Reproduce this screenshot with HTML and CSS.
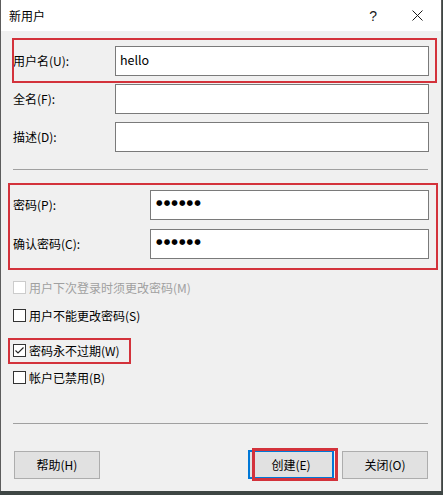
FILE: index.html
```html
<!DOCTYPE html>
<html lang="zh-CN">
<head>
<meta charset="utf-8">
<title>新用户</title>
<link rel="stylesheet" href="styles.css">
</head>
<body>
<div class="window">
  <div class="titlebar">
    <span class="title">新用户</span>
    <span class="help-q">?</span>
    <svg class="close-x" width="11" height="11" viewBox="0 0 11 11"><path d="M0.5 0.5 L10.5 10.5 M10.5 0.5 L0.5 10.5" stroke="#1a1a1a" stroke-width="1" fill="none"/></svg>
  </div>
  <div class="content">
    <div class="row">
      <label class="lbl lbl-a">用户名(U):</label>
      <div class="field">hello</div>
    </div>
    <div class="row gap8">
      <label class="lbl lbl-a">全名(F):</label>
      <div class="field"></div>
    </div>
    <div class="row gap8">
      <label class="lbl lbl-a">描述(D):</label>
      <div class="field"></div>
    </div>
    <div class="sep sep1"></div>
    <div class="row pw1">
      <label class="lbl lbl-b">密码(P):</label>
      <div class="field pw">●●●●●●</div>
    </div>
    <div class="row gap9">
      <label class="lbl lbl-b">确认密码(C):</label>
      <div class="field pw">●●●●●●</div>
    </div>
    <div class="check c1 disabled"><span class="box"></span><span>用户下次登录时须更改密码(M)</span></div>
    <div class="check c2"><span class="box"></span><span>用户不能更改密码(S)</span></div>
    <div class="check c3"><span class="box"><svg width="11" height="11" viewBox="0 0 11 11"><path d="M1.5 5.5 L4 8 L9.5 2.5" stroke="#222" stroke-width="1.1" fill="none"/></svg></span><span>密码永不过期(W)</span></div>
    <div class="check c4"><span class="box"></span><span>帐户已禁用(B)</span></div>
    <div class="sep sep2"></div>
    <div class="buttons">
      <button class="btn btn-help">帮助(H)</button>
      <button class="btn btn-default">创建(E)</button>
      <button class="btn">关闭(O)</button>
    </div>
  </div>
  <div class="mark mark1"></div>
  <div class="mark mark2"></div>
  <div class="mark mark3"></div>
  <div class="mark mark4"></div>
</div>
</body>
</html>
```
FILE: styles.css
```css
html, body {
  margin: 0;
  padding: 0;
}
body {
  width: 443px;
  height: 495px;
  background: #3e4644;
  overflow: hidden;
  font-family: "Noto Sans CJK SC", "Noto Sans", sans-serif;
  font-size: 12px;
  color: #000;
}
.window {
  position: relative;
  width: 440px;
  height: 491px;
  background: #f0f0f0;
  border-left: 1px solid #5c5c5c;
  border-right: 1px solid #5c5c5c;
  box-sizing: content-box;
}
.titlebar {
  height: 31px;
  background: #fff;
  display: flex;
  align-items: center;
}
.title {
  margin-left: 8px;
  font-size: 12px;
  line-height: 16px;
}
.help-q {
  margin-left: auto;
  font-family: "Liberation Sans", sans-serif;
  font-size: 14px;
  color: #1a1a1a;
  margin-right: 35px;
}
.close-x {
  margin-right: 18px;
}
.content {
  padding: 15px 12px 0 12px;
}
.row {
  display: flex;
  align-items: center;
  height: 30px;
}
.gap8 { margin-top: 8px; }
.gap9 { margin-top: 9px; }
.pw1 { margin-top: 20px; }
.lbl {
  line-height: 16px;
  white-space: nowrap;
}
.lbl-a { width: 102px; }
.lbl-b { width: 137px; }
.field {
  flex: 1;
  height: 30px;
  box-sizing: border-box;
  background: #fff;
  border: 1px solid #7a7a7a;
  padding: 5px 4px 0 4px;
  line-height: 16px;
  font-size: 12.5px;
}
.field.pw {
  font-family: "DejaVu Sans", sans-serif;
  font-size: 7.5px;
  letter-spacing: 1.1px;
  padding-left: 5px;
  padding-top: 6px;
  line-height: 12px;
}
.sep {
  height: 1px;
  background: #a0a0a0;
}
.sep1 { margin-top: 17px; margin-right: 1px; }
.sep2 { margin-top: 38px; margin-right: 1px; }
.check {
  display: flex;
  align-items: center;
  height: 15px;
  line-height: 15px;
  white-space: nowrap;
}
.check .box {
  width: 13px;
  height: 13px;
  box-sizing: border-box;
  border: 1px solid #333;
  background: #fff;
  margin-right: 3px;
  display: flex;
  align-items: center;
  justify-content: center;
}
.check.disabled { color: #a0a0a0; }
.check.disabled .box { border-color: #cccccc; }
.c1 { margin-top: 21px; }
.c2 { margin-top: 13px; }
.c3 { margin-top: 20px; }
.c4 { margin-top: 12px; }
.buttons {
  display: flex;
  align-items: center;
  gap: 8px;
  margin-top: 26px;
  padding-left: 1px;
  padding-right: 1px;
}
.btn {
  width: 86px;
  height: 28px;
  box-sizing: border-box;
  background: #e1e1e1;
  border: 1px solid #adadad;
  font-family: "Noto Sans CJK SC", sans-serif;
  font-size: 12px;
  color: #000;
  padding: 0;
  line-height: 16px;
}
.btn-help { margin-right: auto; }
.btn-default {
  border: 1px solid #0078d7;
  box-shadow: inset 0 0 0 1px #0078d7;
  height: 29px;
}
.mark {
  position: absolute;
  border: 2px solid #d3323b;
  box-sizing: border-box;
}
.mark1 { left: 11px; top: 38px; width: 425px; height: 45px; }
.mark2 { left: 7px; top: 183px; width: 430px; height: 87px; }
.mark3 { left: 7px; top: 338px; width: 123px; height: 26px; }
.mark4 { left: 251px; top: 448px; width: 86px; height: 33px; border-width: 3px; }
```
